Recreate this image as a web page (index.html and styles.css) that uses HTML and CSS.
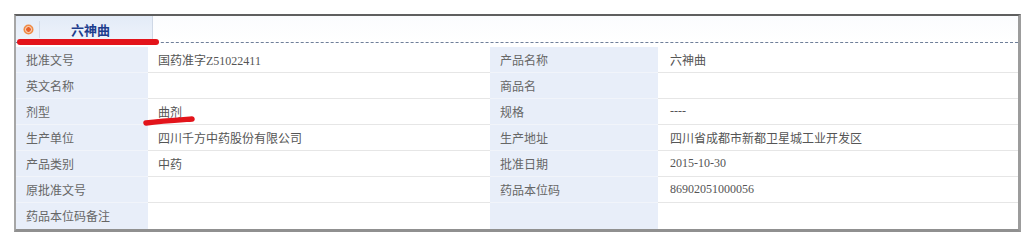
FILE: index.html
```html
<!DOCTYPE html>
<html lang="zh-CN">
<head>
    <meta charset="UTF-8">
    <title>六神曲</title>
    <link rel="stylesheet" href="styles.css">
</head>
<body>
    <div class="panel">
        <div class="panel_head">
            <div class="tab">
                <span class="tab_icon"></span>
                <span class="tab_sep"></span>
                <span class="tab_title">六神曲</span>
            </div>
        </div>
        <table class="info">
            <colgroup>
                <col class="c_label1">
                <col class="c_value1">
                <col class="c_label2">
                <col class="c_value2">
            </colgroup>
            <tr>
                <th>批准文号</th><td>国药准字Z51022411</td>
                <th>产品名称</th><td>六神曲</td>
            </tr>
            <tr>
                <th>英文名称</th><td></td>
                <th>商品名</th><td></td>
            </tr>
            <tr>
                <th>剂型</th><td>曲剂</td>
                <th>规格</th><td>----</td>
            </tr>
            <tr>
                <th>生产单位</th><td>四川千方中药股份有限公司</td>
                <th>生产地址</th><td>四川省成都市新都卫星城工业开发区</td>
            </tr>
            <tr>
                <th>产品类别</th><td>中药</td>
                <th>批准日期</th><td>2015-10-30</td>
            </tr>
            <tr>
                <th>原批准文号</th><td></td>
                <th>药品本位码</th><td>86902051000056</td>
            </tr>
            <tr>
                <th>药品本位码备注</th><td></td>
                <th></th><td></td>
            </tr>
        </table>
    </div>

    <!-- hand-drawn red marker strokes -->
    <span class="mark mark_title"></span>
    <svg class="mark_form" width="60" height="14" viewBox="0 0 60 14">
        <path d="M4 9 C 20 7, 36 6, 50 5" stroke="#e3141b" stroke-width="5.5" stroke-linecap="round" fill="none"/>
    </svg>
</body>
</html>
```

FILE: styles.css
```css
body, html {
    margin: 0;
    padding: 0;
    background: #fff;
    width: 100%;
    height: 100%;
    overflow: hidden;
}
body {
    position: relative;
    font-family: "Liberation Serif", "Noto Sans CJK SC", serif;
    font-size: 12px;
    color: #555;
}
.panel {
    margin: 14px 0 0 14px;
    width: 1002px;
    border-top: 2px solid #5f5f5f;
    border-left: 2px solid #a6a6a6;
    border-right: 3px solid #9c9c9c;
    border-bottom: 3px solid #909090;
    background: #fff;
}
.panel_head {
    height: 26px;
    border-bottom: 1px dashed #6f7f99;
    margin-bottom: 4px;
    background: linear-gradient(#fbfcfe, #ffffff);
}
.tab {
    display: flex;
    align-items: center;
    width: 136px;
    height: 26px;
    border-right: 1px solid #cfd8e6;
    background: linear-gradient(#e3ebf7, #eef3fb);
}
.tab_icon {
    width: 5px;
    height: 5px;
    margin-left: 9px;
    border-radius: 50%;
    background: #e8622a;
    border: 1px solid #fbe3d2;
    box-shadow: 0 0 0 1.5px #ef8b45;
}
.tab_sep {
    width: 1px;
    height: 17px;
    margin-left: 7px;
    background: #d3dbe8;
}
.tab_title {
    margin-left: 31px;
    font-family: "Noto Sans CJK SC", sans-serif;
    font-weight: bold;
    font-size: 13px;
    color: #1e3d8d;
    padding-top: 1px;
}
.info {
    border-collapse: collapse;
    table-layout: fixed;
    width: 1002px;
}
.c_label1 { width: 132px; }
.c_value1 { width: 342px; }
.c_label2 { width: 168px; }
.c_value2 { width: 360px; }
.info th, .info td {
    height: 25px;
    padding: 0 0 0 10px;
    border-bottom: 1px solid #e6e6e6;
    text-align: left;
    font-weight: normal;
    white-space: nowrap;
}
.info tr:last-child th, .info tr:last-child td {
    border-bottom: none;
    height: 26px;
}
.info th {
    background: #e8eef9;
    color: #666;
    border-bottom-color: #f1f4fa;
}
.info td {
    color: #555;
}
.info td:last-child {
    padding-left: 12px;
}
.mark {
    position: absolute;
    background: #e3141b;
    border-radius: 3px;
}
.mark_title {
    left: 17px;
    top: 39px;
    width: 142px;
    height: 6px;
}
.mark_form {
    position: absolute;
    left: 142px;
    top: 114px;
}
```
